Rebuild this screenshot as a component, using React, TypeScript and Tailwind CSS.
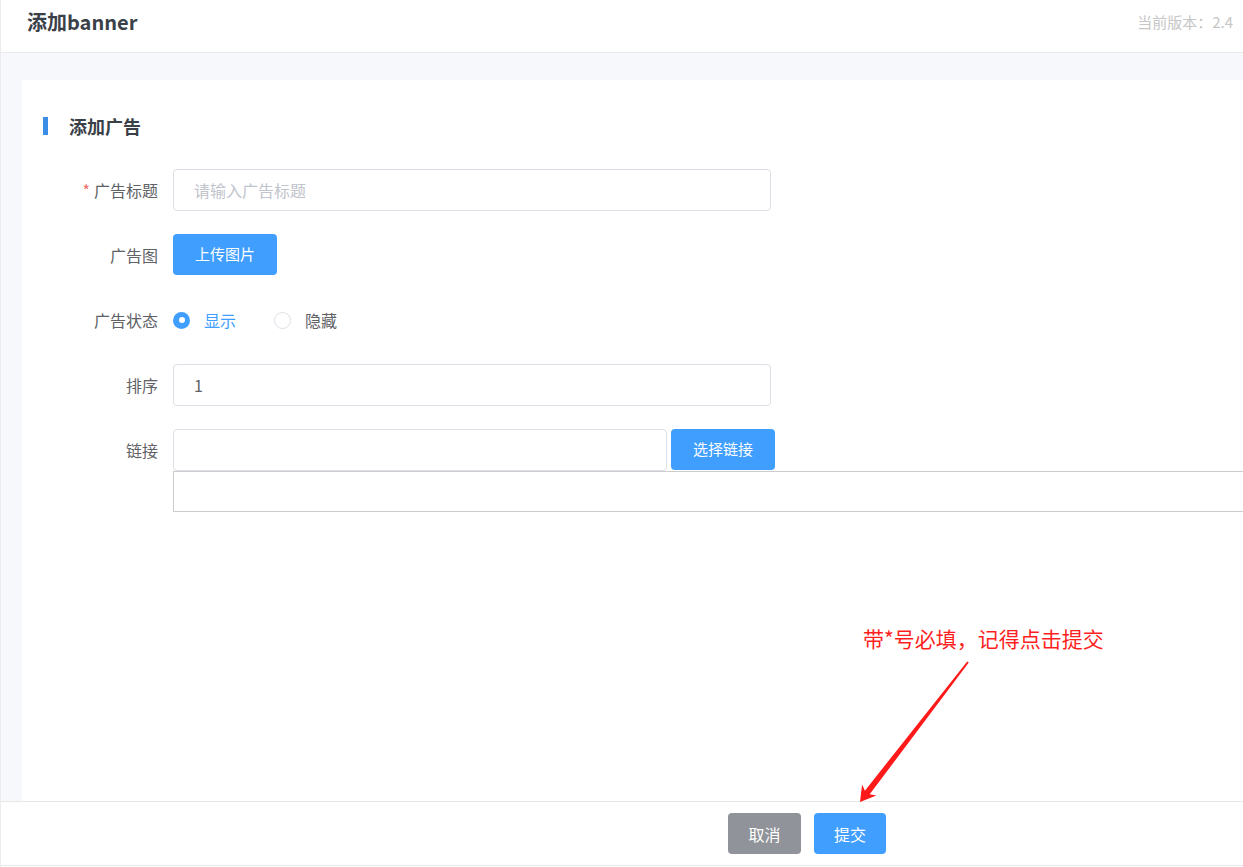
import { useState } from 'react';

const font = { fontFamily: '"Noto Sans CJK SC", "Noto Sans", sans-serif' };

function FormRow({ label, required, children }: { label: string; required?: boolean; children: React.ReactNode }) {
  return (
    <div className="flex items-start mb-[23px]">
      <div className="w-[151px] pr-[15px] h-[42px] flex items-center justify-end text-[16px] text-[#606266] shrink-0">
        {required && <span className="text-[#f56c6c] mr-[4px]">*</span>}
        {label}
      </div>
      <div className="flex-1 min-w-0">{children}</div>
    </div>
  );
}

export default function App() {
  const [title, setTitle] = useState('');
  const [sort, setSort] = useState('1');
  const [link, setLink] = useState('');
  const [status, setStatus] = useState<'show' | 'hide'>('show');

  return (
    <div className="relative h-[867px] flex flex-col border-l border-[#ececec] bg-white overflow-hidden" style={font}>
      {/* header */}
      <div className="h-[53px] shrink-0 border-b border-[#e8eaef] flex items-center justify-between pl-[26px] pr-[10px]">
        <div className="text-[20px] font-bold text-[#3a3f48] leading-none -mt-[8px]">添加banner</div>
        <div className="text-[15px] text-[#c6c6c6] -mt-[8px]">当前版本：2.4</div>
      </div>

      {/* main */}
      <div className="flex-1 bg-[#f7f8fb] pt-[27px] pl-[21px] flex min-h-0">
        <div className="flex-1 bg-white overflow-hidden pt-[34px]">
          <div className="flex items-center h-[24px] pl-[21px]">
            <div className="w-[5px] h-[18px] bg-[#3a8ee6]" />
            <div className="ml-[21px] text-[18px] font-bold text-[#3a3f48]">添加广告</div>
          </div>

          <div className="mt-[31px]">
            <FormRow label="广告标题" required>
              <input
                value={title}
                onChange={(e) => setTitle(e.target.value)}
                placeholder="请输入广告标题"
                className="w-[598px] h-[42px] rounded-[4px] border border-[#dcdfe6] px-[20px] text-[16px] text-[#606266] placeholder-[#c0c4cc] outline-none"
              />
            </FormRow>

            <FormRow label="广告图">
              <button className="w-[104px] h-[41px] rounded-[4px] bg-[#409eff] text-white text-[15px]">上传图片</button>
            </FormRow>

            <FormRow label="广告状态">
              <div className="h-[42px] flex items-center">
                <label className="flex items-center cursor-pointer" onClick={() => setStatus('show')}>
                  <span
                    className={
                      status === 'show'
                        ? 'w-[17px] h-[17px] rounded-full bg-[#409eff] flex items-center justify-center'
                        : 'w-[17px] h-[17px] rounded-full border border-[#dcdfe6] bg-white'
                    }
                  >
                    {status === 'show' && <span className="w-[6px] h-[6px] rounded-full bg-white" />}
                  </span>
                  <span className={status === 'show' ? 'ml-[14px] text-[16px] text-[#409eff]' : 'ml-[14px] text-[16px] text-[#606266]'}>显示</span>
                </label>
                <label className="flex items-center cursor-pointer ml-[38px]" onClick={() => setStatus('hide')}>
                  <span
                    className={
                      status === 'hide'
                        ? 'w-[17px] h-[17px] rounded-full bg-[#409eff] flex items-center justify-center'
                        : 'w-[17px] h-[17px] rounded-full border border-[#dcdfe6] bg-white'
                    }
                  >
                    {status === 'hide' && <span className="w-[6px] h-[6px] rounded-full bg-white" />}
                  </span>
                  <span className={status === 'hide' ? 'ml-[14px] text-[16px] text-[#409eff]' : 'ml-[14px] text-[16px] text-[#606266]'}>隐藏</span>
                </label>
              </div>
            </FormRow>

            <FormRow label="排序">
              <input
                value={sort}
                onChange={(e) => setSort(e.target.value)}
                className="w-[598px] h-[42px] rounded-[4px] border border-[#dcdfe6] px-[20px] text-[16px] text-[#606266] outline-none"
              />
            </FormRow>

            <FormRow label="链接">
              <div className="flex items-start">
                <input
                  value={link}
                  onChange={(e) => setLink(e.target.value)}
                  className="w-[494px] h-[42px] rounded-[4px] border border-[#dcdfe6] px-[20px] text-[16px] text-[#606266] outline-none"
                />
                <button className="ml-[4px] w-[104px] h-[41px] rounded-[4px] bg-[#409eff] text-white text-[15px]">选择链接</button>
              </div>
              <div className="w-[1100px] h-[41px] border border-[#cccccc]" />
            </FormRow>
          </div>
        </div>
      </div>

      {/* footer */}
      <div className="h-[65px] shrink-0 border-t border-b border-[#e8e8e8] flex items-center pl-[727px]">
        <button className="w-[73px] h-[41px] rounded-[4px] bg-[#909399] text-white text-[16px]">取消</button>
        <button className="ml-[13px] w-[72px] h-[41px] rounded-[4px] bg-[#409eff] text-white text-[16px]">提交</button>
      </div>
      <div className="h-[1px] shrink-0" />

      {/* annotation */}
      <div className="absolute left-[862px] top-[624px] text-[21px] leading-[28px] text-[#ff1f1f] whitespace-nowrap">
        带*号必填，记得点击提交
      </div>
      <svg className="absolute left-[854px] top-[655px]" width="120" height="155" viewBox="0 0 120 155">
        <polygon
          points="112.2,6.4 9.9,135.7 7.1,129.6 5,147 21.3,140.6 14.7,139.3 113.8,7.6"
          fill="#ff1a1a"
        />
      </svg>
    </div>
  );
}
